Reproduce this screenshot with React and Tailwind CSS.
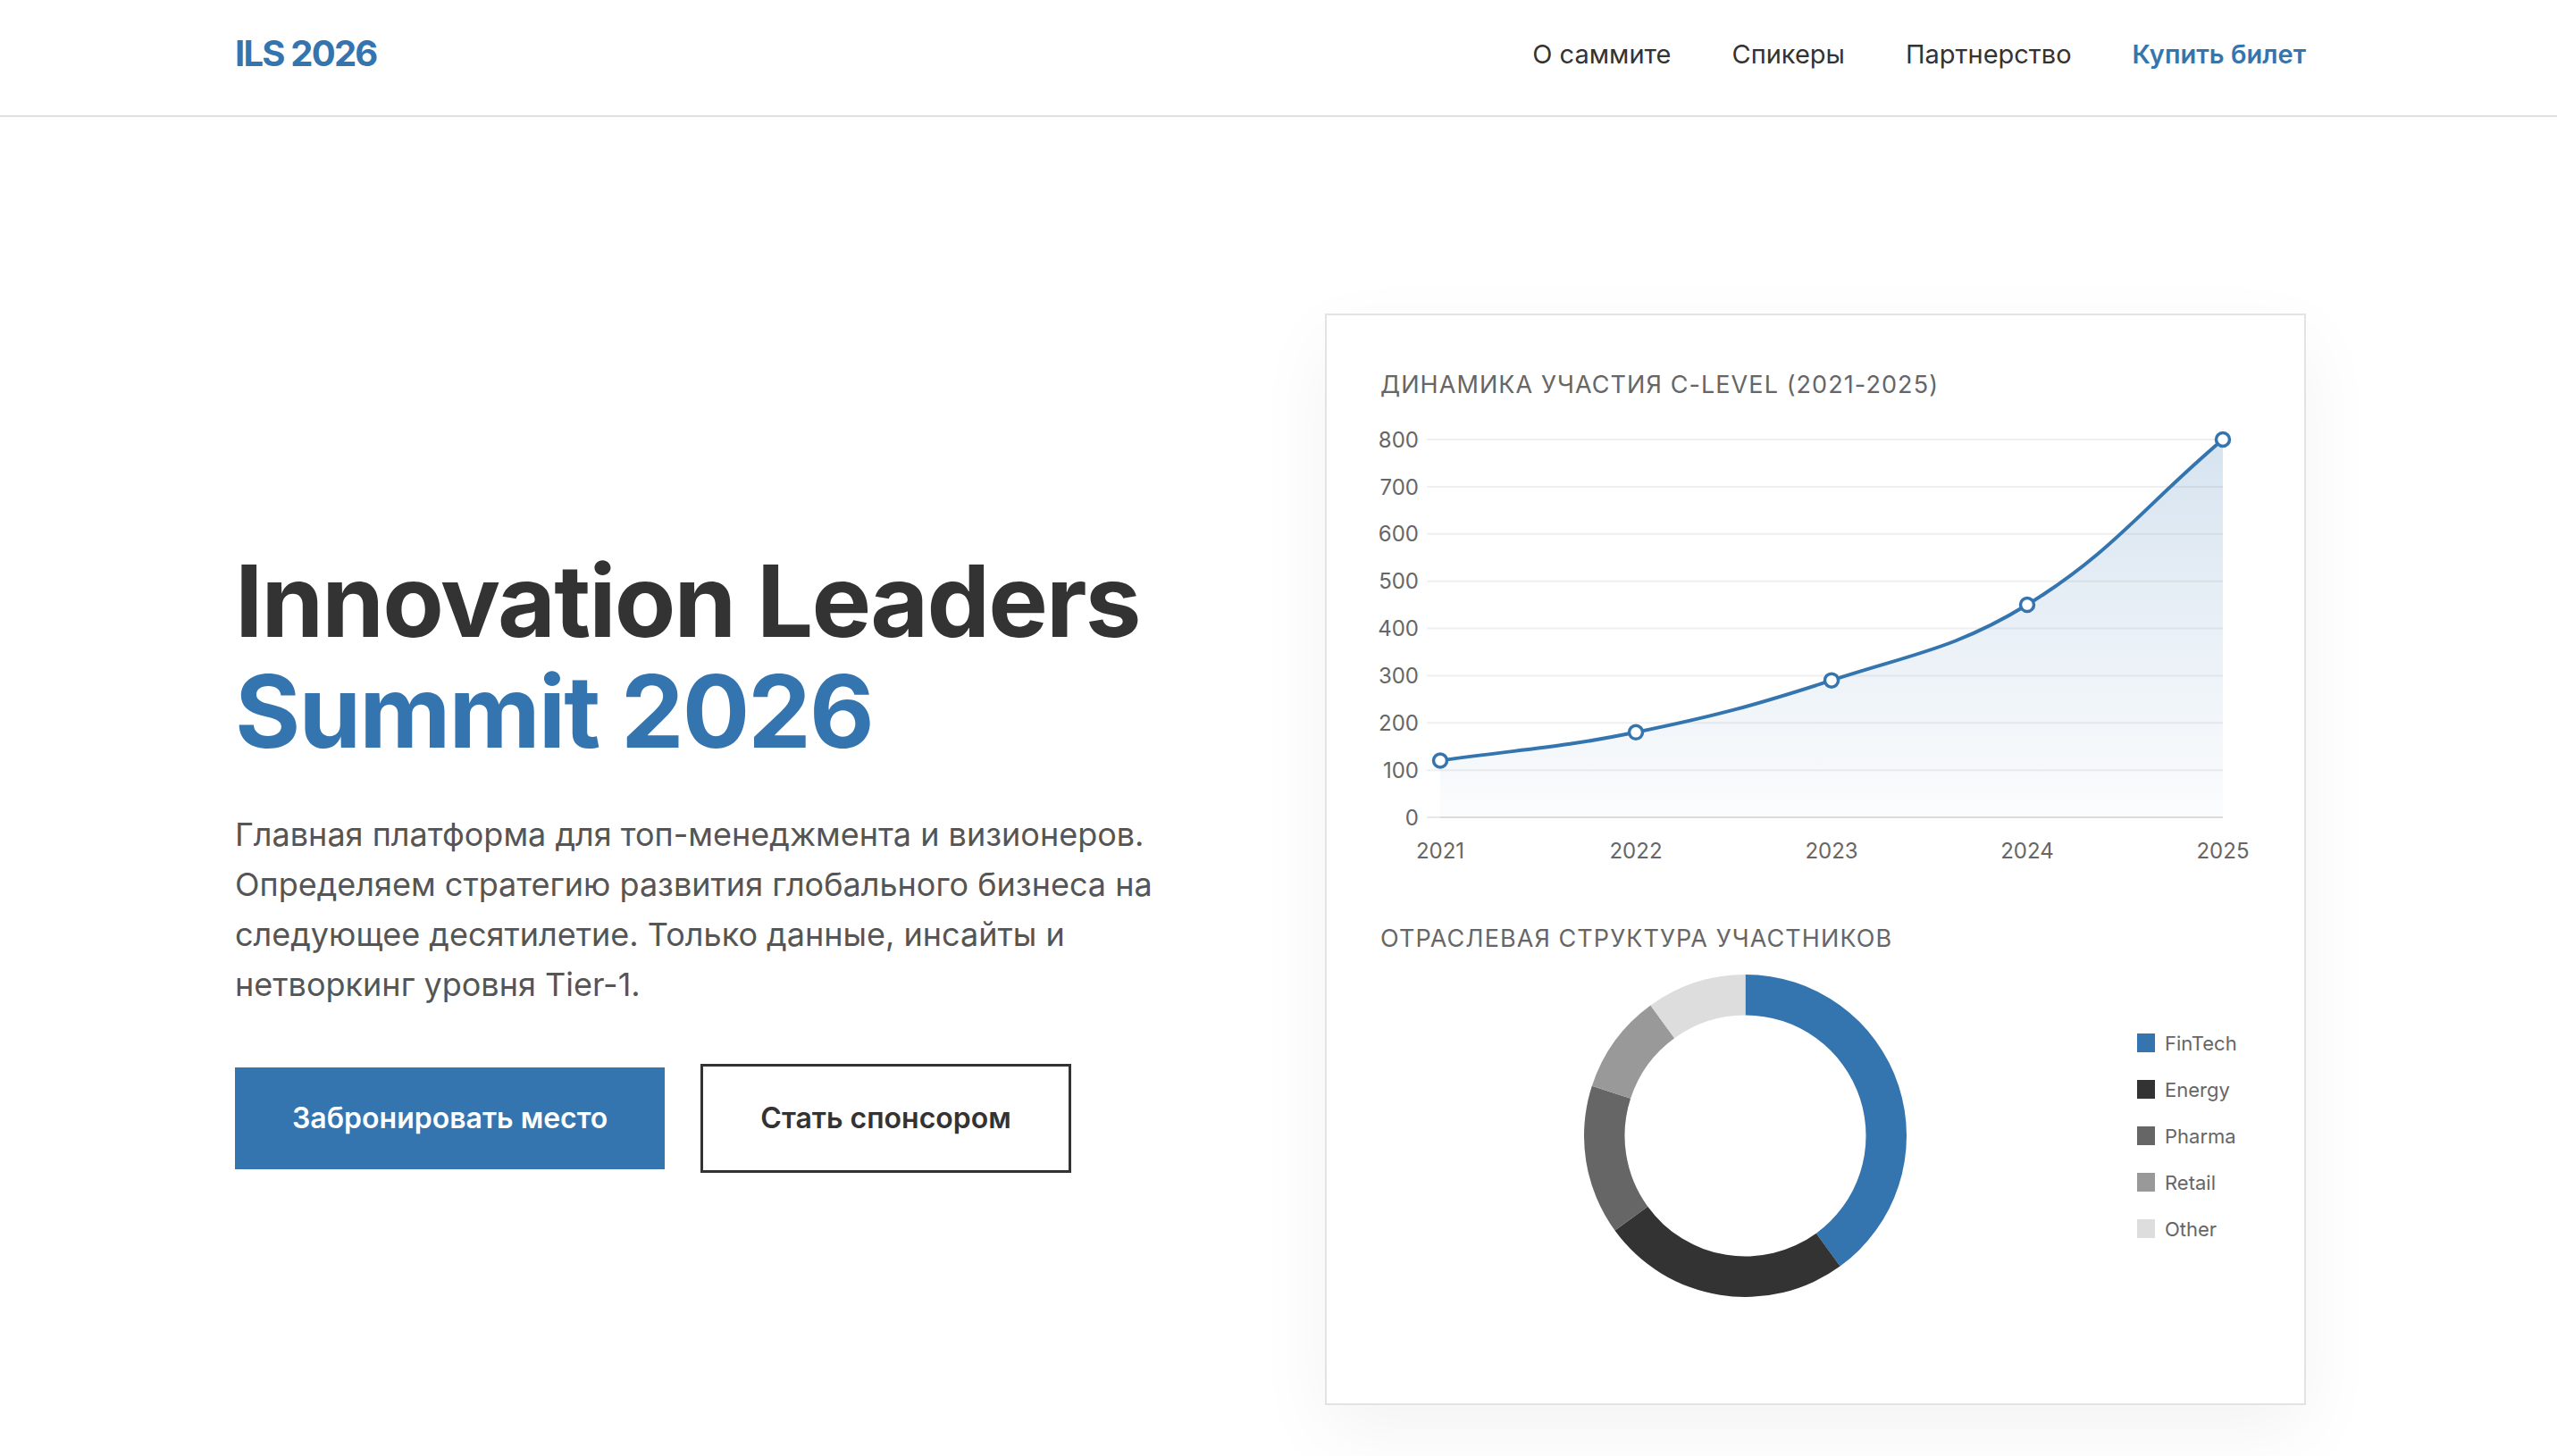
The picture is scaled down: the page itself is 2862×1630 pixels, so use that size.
import React from "react";

const BLUE = "#3475b0";

function splinePath(pts, t = 0.4) {
  const cps = pts.map((p, i) => {
    const prev = pts[i - 1] || p;
    const next = pts[i + 1] || p;
    const d01 = Math.hypot(p.x - prev.x, p.y - prev.y);
    const d12 = Math.hypot(next.x - p.x, next.y - p.y);
    const sum = d01 + d12 || 1;
    const fa = t * (d01 / sum);
    const fb = t * (d12 / sum);
    return {
      prev: { x: p.x - fa * (next.x - prev.x), y: p.y - fa * (next.y - prev.y) },
      next: { x: p.x + fb * (next.x - prev.x), y: p.y + fb * (next.y - prev.y) },
    };
  });
  let d = `M ${pts[0].x} ${pts[0].y}`;
  for (let i = 1; i < pts.length; i++) {
    const a = cps[i - 1].next;
    const b = cps[i].prev;
    const p = pts[i];
    d += ` C ${a.x} ${a.y} ${b.x} ${b.y} ${p.x} ${p.y}`;
  }
  return d;
}

const years = ["2021", "2022", "2023", "2024", "2025"];
const values = [120, 180, 290, 450, 800];
const X0 = 67;
const XSTEP = 219;
const Y0 = 466;
const YUNIT = 0.52875;

function LineChart() {
  const pts = values.map((v, i) => ({ x: X0 + i * XSTEP, y: Y0 - v * YUNIT }));
  const line = splinePath(pts);
  const area = `${line} L ${pts[pts.length - 1].x} ${Y0} L ${pts[0].x} ${Y0} Z`;
  const ticks = [0, 100, 200, 300, 400, 500, 600, 700, 800];
  return (
    <svg width="974" height="524" viewBox="0 0 974 524" className="block overflow-visible">
      <defs>
        <linearGradient id="fillGrad" x1="0" y1="43" x2="0" y2="466" gradientUnits="userSpaceOnUse">
          <stop offset="0" stopColor={BLUE} stopOpacity="0.2" />
          <stop offset="1" stopColor={BLUE} stopOpacity="0.02" />
        </linearGradient>
      </defs>
      {ticks.map((t) => {
        const y = Y0 - t * YUNIT;
        return (
          <g key={t}>
            <line x1="52" x2="943" y1={y} y2={y} stroke={t === 0 ? "#e8e8e8" : "#efefef"} strokeWidth="2" />
            <text x="43" y={y + 8.7} textAnchor="end" fontFamily="Inter, sans-serif" fontSize="24" fill="#666">
              {t}
            </text>
          </g>
        );
      })}
      <line x1="67" x2="943" y1={Y0} y2={Y0} stroke="#dcdcdc" strokeWidth="2" />
      <path d={area} fill="url(#fillGrad)" />
      <path d={line} fill="none" stroke={BLUE} strokeWidth="4" strokeLinejoin="round" />
      {pts.map((p, i) => (
        <circle key={i} cx={p.x} cy={p.y} r="7.5" fill="#fff" stroke={BLUE} strokeWidth="3.5" />
      ))}
      {years.map((y, i) => (
        <text
          key={y}
          x={X0 + i * XSTEP}
          y={511.7}
          textAnchor="middle"
          fontFamily="Inter, sans-serif"
          fontSize="24"
          fill="#666"
        >
          {y}
        </text>
      ))}
    </svg>
  );
}

const segments = [
  { label: "FinTech", value: 40, color: BLUE },
  { label: "Energy", value: 25, color: "#333333" },
  { label: "Pharma", value: 15, color: "#666666" },
  { label: "Retail", value: 10, color: "#999999" },
  { label: "Other", value: 10, color: "#dddddd" },
];

function arc(cx, cy, R, r, a0, a1) {
  const rad = (a) => ((a - 90) * Math.PI) / 180;
  const p = (a, rr) => [cx + rr * Math.cos(rad(a)), cy + rr * Math.sin(rad(a))];
  const large = a1 - a0 > 180 ? 1 : 0;
  const [ox0, oy0] = p(a0, R);
  const [ox1, oy1] = p(a1, R);
  const [ix1, iy1] = p(a1, r);
  const [ix0, iy0] = p(a0, r);
  return `M ${ox0} ${oy0} A ${R} ${R} 0 ${large} 1 ${ox1} ${oy1} L ${ix1} ${iy1} A ${r} ${r} 0 ${large} 0 ${ix0} ${iy0} Z`;
}

function Donut() {
  let acc = 0;
  const total = segments.reduce((s, x) => s + x.value, 0);
  return (
    <svg width="361" height="361" viewBox="0 0 361 361" className="block">
      {segments.map((s) => {
        const a0 = (acc / total) * 360;
        acc += s.value;
        const a1 = (acc / total) * 360;
        return <path key={s.label} d={arc(180.5, 180.5, 180.5, 135, a0, a1)} fill={s.color} />;
      })}
    </svg>
  );
}

export default function App() {
  return (
    <div className="min-h-screen bg-white font-['Inter',sans-serif] text-[#333]">
      <header className="h-[131px] border-b-2 border-[#e0e0e0]">
        <div className="ml-[263px] w-[2318px] h-[120px] flex items-center justify-between">
          <div className="text-[40px] leading-[40px] font-bold tracking-[-0.045em] text-[#3475b0]">
            ILS 2026
          </div>
          <nav className="flex items-center gap-[68px] text-[29px] leading-[29px] text-[#333]">
            <a href="#">О саммите</a>
            <a href="#">Спикеры</a>
            <a href="#">Партнерство</a>
            <a href="#" className="font-semibold text-[#3475b0]">
              Купить билет
            </a>
          </nav>
        </div>
      </header>

      <main className="pt-[220px] pb-[220px]">
        <div className="ml-[263px] w-[2318px] grid grid-cols-2 gap-[122px] items-center">
          <div>
            <h1 className="text-[112px] leading-[1.1] font-bold tracking-[-0.017em] text-[#333]">
              Innovation Leaders
              <br />
              <span className="text-[#3475b0]">Summit 2026</span>
            </h1>
            <p className="mt-12 text-[36px] leading-[56px] text-[#555]">
              Главная платформа для топ-менеджмента и визионеров. Определяем стратегию развития глобального
              бизнеса на следующее десятилетие. Только данные, инсайты и нетворкинг уровня Tier-1.
            </p>
            <div className="mt-[61px] flex items-center gap-[40px]">
              <button className="bg-[#3475b0] text-white px-16 py-[33px] text-[32px] leading-[48px] font-semibold">
                Забронировать место
              </button>
              <button className="border-[3px] border-[#333] bg-white text-[#333] px-16 py-[34px] text-[32px] leading-[48px] font-semibold">
                Стать спонсором
              </button>
            </div>
          </div>

          <div className="border-2 border-[#e3e3e3] bg-white p-[60px] shadow-[0_30px_80px_rgba(0,0,0,0.05)]">
            <h3 className="text-[27px] leading-[36px] uppercase tracking-[0.04em] text-[#666] font-normal">
              Динамика участия C-Level (2021-2025)
            </h3>
            <LineChart />
            <h3 className="mt-[60px] text-[27px] leading-[36px] uppercase tracking-[0.04em] text-[#666] font-normal">
              Отраслевая структура участников
            </h3>
            <div className="mt-[22px] mb-[59px] flex items-center">
              <div className="w-[816px] flex justify-center">
                <Donut />
              </div>
              <div className="w-[158px] pl-[31px] flex flex-col">
                {segments.map((s) => (
                  <div key={s.label} className="h-[52px] flex items-center gap-[11px]">
                    <span className="w-[20px] h-[21px] shrink-0" style={{ backgroundColor: s.color }} />
                    <span className="text-[22px] leading-[24px] text-[#666]">{s.label}</span>
                  </div>
                ))}
              </div>
            </div>
          </div>
        </div>
      </main>
    </div>
  );
}
